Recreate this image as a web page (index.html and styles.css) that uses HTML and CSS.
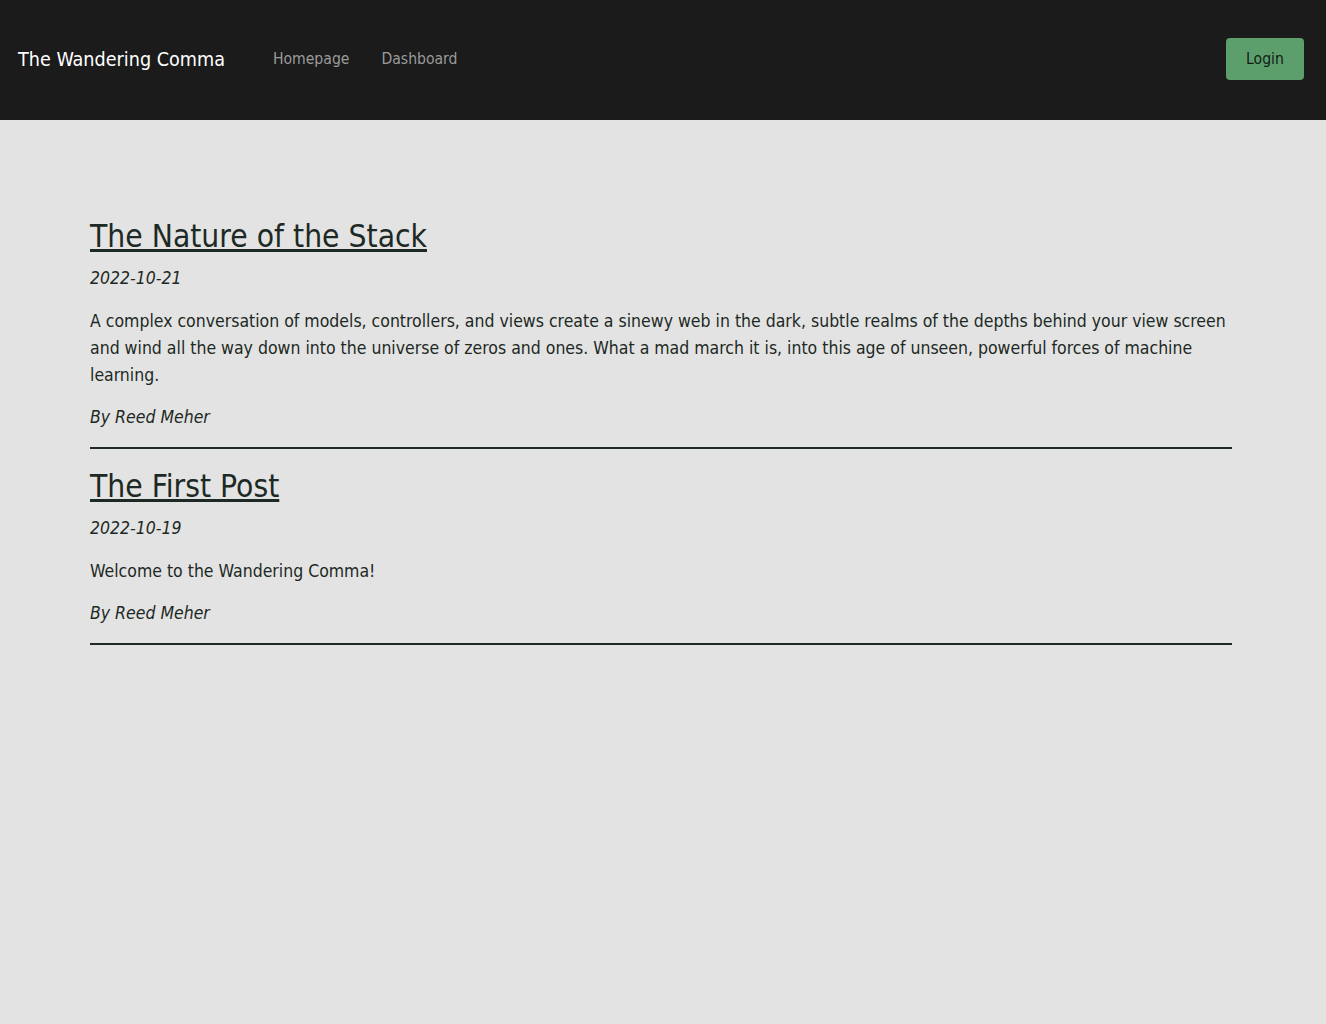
FILE: index.html
```html
<!DOCTYPE html>
<html lang="en">
<head>
<meta charset="utf-8">
<title>The Wandering Comma</title>
<link rel="stylesheet" href="styles.css">
</head>
<body>
<header class="navbar">
  <a class="brand" href="#">The Wandering Comma</a>
  <nav class="nav-links">
    <a href="#">Homepage</a>
    <a href="#">Dashboard</a>
  </nav>
  <button class="login">Login</button>
</header>
<main class="posts">
  <article class="post">
    <h2 class="post-title"><a href="#">The Nature of the Stack</a></h2>
    <p class="post-date">2022-10-21</p>
    <p class="post-body">A complex conversation of models, controllers, and views create a sinewy web in the dark, subtle realms of the depths behind your view screen and wind all the way down into the universe of zeros and ones. What a mad march it is, into this age of unseen, powerful forces of machine learning.</p>
    <p class="post-author">By Reed Meher</p>
  </article>
  <article class="post">
    <h2 class="post-title"><a href="#">The First Post</a></h2>
    <p class="post-date">2022-10-19</p>
    <p class="post-body">Welcome to the Wandering Comma!</p>
    <p class="post-author">By Reed Meher</p>
  </article>
</main>
</body>
</html>
```
FILE: styles.css
```css
* { box-sizing: border-box; }
html, body { margin: 0; padding: 0; }
body {
  background: #e3e3e3;
  color: #1d2924;
  font-family: "DejaVu Sans Condensed", "DejaVu Sans", sans-serif;
  font-size: 17.5px;
  min-height: 1024px;
}
.navbar {
  height: 120px;
  background: #1b1b1b;
  display: flex;
  align-items: center;
  padding: 0 22px 2px 18px;
}
.brand {
  color: #ffffff;
  text-decoration: none;
  font-size: 19.6px;
  margin-right: 48px;
}
.nav-links { display: flex; gap: 32px; flex: 1; }
.nav-links a {
  color: #9a9a9a;
  text-decoration: none;
  font-size: 15.6px;
}
.login {
  background: #5d9f6c;
  color: #111c15;
  border: 0;
  border-radius: 4px;
  font-family: inherit;
  font-size: 15.6px;
  width: 78px;
  height: 42px;
}
.posts {
  padding: 96px 94px 0 90px;
}
.post {
  border-bottom: 2px solid #1f2a26;
  padding-bottom: 16px;
}
.post + .post { margin-top: 17px; }
.post-title {
  margin: 0;
  font-size: 31.5px;
  font-weight: normal;
  line-height: 40px;
}
.post-title a { color: #1d2924; }
.post-date {
  font-style: italic;
  margin: 9px 0 0;
  line-height: 27px;
}
.post-body {
  margin: 16px 0 0;
  line-height: 27px;
}
.post-author {
  font-style: italic;
  margin: 15px 0 0;
  line-height: 27px;
}
```
